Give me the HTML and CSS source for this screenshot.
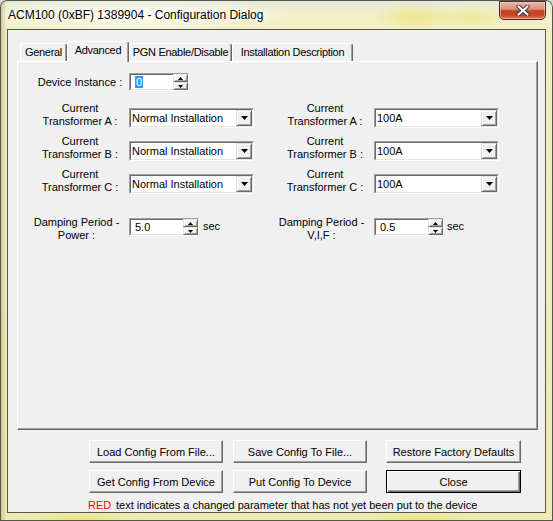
FILE: index.html
```html
<!DOCTYPE html>
<html>
<head>
<meta charset="utf-8">
<link rel="stylesheet" href="styles.css">
</head>
<body>
<div class="window">
  <div class="titlebar">
    <span class="title">ACM100 (0xBF) 1389904 - Configuration Dialog</span>
    <div class="close-x">
      <svg width="14" height="11" viewBox="0 0 14 11">
        <path d="M2.5 1.5 L11.5 9.5 M11.5 1.5 L2.5 9.5" stroke="#3a3a46" stroke-width="4.2" stroke-linecap="round" fill="none"/>
        <path d="M2.5 1.5 L11.5 9.5 M11.5 1.5 L2.5 9.5" stroke="#ffffff" stroke-width="2.2" stroke-linecap="round" fill="none"/>
      </svg>
    </div>
  </div>
  <div class="client">
    <div class="tabs">
      <div class="tab t-general">General</div>
      <div class="tab t-adv active">Advanced</div>
      <div class="tab t-pgn">PGN Enable/Disable</div>
      <div class="tab t-inst">Installation Description</div>
    </div>
    <div class="panel">
      <div class="row row-dev">
        <div class="field">
          <div class="lbl">Device Instance :</div>
          <div class="spin spin-dev">
            <div class="spin-text"><span class="sel">0</span></div>
            <div class="updown">
              <div class="ud-btn"><svg width="5" height="3" viewBox="0 0 5 3"><path d="M2.5 0 L5 3 H0 Z" fill="#000"/></svg></div>
              <div class="ud-btn"><svg width="5" height="3" viewBox="0 0 5 3"><path d="M0 0 H5 L2.5 3 Z" fill="#000"/></svg></div>
            </div>
          </div>
        </div>
      </div>

      <div class="row row-ct first">
        <div class="field">
          <div class="lbl">Current<br>Transformer A :</div>
          <div class="combo"><div class="combo-in"><span class="combo-text">Normal Installation</span><div class="dd-btn"><svg width="7" height="4" viewBox="0 0 7 4"><path d="M0 0 H7 L3.5 4 Z" fill="#000"/></svg></div></div></div>
        </div>
        <div class="field">
          <div class="lbl">Current<br>Transformer A :</div>
          <div class="combo"><div class="combo-in"><span class="combo-text">100A</span><div class="dd-btn"><svg width="7" height="4" viewBox="0 0 7 4"><path d="M0 0 H7 L3.5 4 Z" fill="#000"/></svg></div></div></div>
        </div>
      </div>

      <div class="row row-ct">
        <div class="field">
          <div class="lbl">Current<br>Transformer B :</div>
          <div class="combo"><div class="combo-in"><span class="combo-text">Normal Installation</span><div class="dd-btn"><svg width="7" height="4" viewBox="0 0 7 4"><path d="M0 0 H7 L3.5 4 Z" fill="#000"/></svg></div></div></div>
        </div>
        <div class="field">
          <div class="lbl">Current<br>Transformer B :</div>
          <div class="combo"><div class="combo-in"><span class="combo-text">100A</span><div class="dd-btn"><svg width="7" height="4" viewBox="0 0 7 4"><path d="M0 0 H7 L3.5 4 Z" fill="#000"/></svg></div></div></div>
        </div>
      </div>

      <div class="row row-ct">
        <div class="field">
          <div class="lbl">Current<br>Transformer C :</div>
          <div class="combo"><div class="combo-in"><span class="combo-text">Normal Installation</span><div class="dd-btn"><svg width="7" height="4" viewBox="0 0 7 4"><path d="M0 0 H7 L3.5 4 Z" fill="#000"/></svg></div></div></div>
        </div>
        <div class="field">
          <div class="lbl">Current<br>Transformer C :</div>
          <div class="combo"><div class="combo-in"><span class="combo-text">100A</span><div class="dd-btn"><svg width="7" height="4" viewBox="0 0 7 4"><path d="M0 0 H7 L3.5 4 Z" fill="#000"/></svg></div></div></div>
        </div>
      </div>

      <div class="row row-damp">
        <div class="field">
          <div class="lbl lbl-damp">Damping Period -<br>Power :</div>
          <div class="spin spin-damp">
            <div class="spin-text">5.0</div>
            <div class="updown">
              <div class="ud-btn"><svg width="5" height="3" viewBox="0 0 5 3"><path d="M2.5 0 L5 3 H0 Z" fill="#000"/></svg></div>
              <div class="ud-btn"><svg width="5" height="3" viewBox="0 0 5 3"><path d="M0 0 H5 L2.5 3 Z" fill="#000"/></svg></div>
            </div>
          </div>
          <span class="unit">sec</span>
        </div>
        <div class="field">
          <div class="lbl lbl-damp">Damping Period -<br>V,I,F :</div>
          <div class="spin spin-damp">
            <div class="spin-text">0.5</div>
            <div class="updown">
              <div class="ud-btn"><svg width="5" height="3" viewBox="0 0 5 3"><path d="M2.5 0 L5 3 H0 Z" fill="#000"/></svg></div>
              <div class="ud-btn"><svg width="5" height="3" viewBox="0 0 5 3"><path d="M0 0 H5 L2.5 3 Z" fill="#000"/></svg></div>
            </div>
          </div>
          <span class="unit unit-r">sec</span>
        </div>
      </div>
    </div>

    <div class="btns">
      <button class="btn">Load Config From File...</button>
      <button class="btn">Save Config To File...</button>
      <button class="btn btn-r">Restore Factory Defaults</button>
      <button class="btn">Get Config From Device</button>
      <button class="btn">Put Config To Device</button>
      <button class="btn btn-r btn-default">Close</button>
    </div>
    <div class="note"><span class="red">RED</span>text indicates a changed parameter that has not yet been put to the device</div>
  </div>
</div>
</body>
</html>
```

FILE: styles.css
```css
* { box-sizing: border-box; }
html, body { margin: 0; padding: 0; }
body {
  width: 553px;
  height: 521px;
  overflow: hidden;
  background: #d8d8c8;
  font-family: "Liberation Sans", Arial, sans-serif;
  font-size: 11px;
  color: #000;
}

.window {
  width: 553px;
  height: 521px;
  display: flex;
  flex-direction: column;
  border-radius: 7px 7px 0 0;
  box-shadow: inset 0 0 0 1px #55584a;
  background:
    linear-gradient(to right, rgba(130,128,90,0.45) 0px, rgba(130,128,90,0.45) 1px, rgba(170,168,120,0.3) 2px, rgba(170,168,120,0.3) 4px, rgba(0,0,0,0) 6px),
    radial-gradient(ellipse 160px 20px at 130px 15px, rgba(255,255,255,0.85), rgba(255,255,255,0)),
    radial-gradient(ellipse 45px 13px at 415px 17px, rgba(236,226,110,0.7), rgba(236,226,110,0)),
    radial-gradient(ellipse 40px 12px at 470px 17px, rgba(236,226,110,0.55), rgba(236,226,110,0)),
    radial-gradient(ellipse 70px 6px at 80px 519px, rgba(236,226,110,0.8), rgba(236,226,110,0)),
    radial-gradient(ellipse 70px 6px at 420px 519px, rgba(236,226,110,0.8), rgba(236,226,110,0)),
    linear-gradient(to bottom, #e4e8da 0px, #f2f0cc 14px, #f2efbe 40px, #efebb2 100%);
}

.titlebar {
  height: 29px;
  flex: none;
  display: flex;
  justify-content: space-between;
  align-items: flex-start;
  padding: 0 7px 0 8px;
}
.title {
  font-family: "Liberation Sans", Arial, sans-serif;
  font-size: 12px;
  line-height: 30px;
  color: #000;
  text-shadow: 0 0 5px #fff, 0 0 3px #fff;
}
.close-x {
  width: 47px;
  height: 19px;
  margin-top: 1px;
  border: 1px solid #4d2a24;
  border-radius: 0 0 5px 5px;
  background: linear-gradient(to bottom, #e9b3a4 0%, #de8f78 42%, #c6401f 52%, #c8462a 78%, #dd7d5c 100%);
  box-shadow: inset 0 0 0 1px rgba(255,230,220,0.45);
  display: flex;
  align-items: center;
  justify-content: center;
}

.client {
  margin: 0 7px 8px 7px;
  border: 1px solid #55574b;
  background: #f0f0f0;
  flex: 1;
  display: flex;
  flex-direction: column;
}

.tabs {
  display: flex;
  align-items: flex-end;
  height: 20px;
  margin: 11px 0 0 12px;
  position: relative;
  z-index: 1;
}
.tab {
  height: 18px;
  line-height: 16px;
  text-align: center;
  letter-spacing: -0.3px;
  background: #f0f0f0;
  border-top: 1px solid #fff;
  border-left: 1px solid #fff;
  border-right: 1px solid #696969;
  box-shadow: inset -1px 0 #a0a0a0;
  border-radius: 3px 3px 0 0;
  white-space: nowrap;
}
.tab.active {
  height: 21px;
  margin-bottom: -1px;
}
.t-general { width: 47px; }
.t-adv { width: 62px; }
.t-pgn { width: 103px; }
.t-inst { width: 121px; }

.panel {
  margin: 0 7px 0 9px;
  height: 369px;
  flex: none;
  border-top: 1px solid #fff;
  border-left: 1px solid #fff;
  border-right: 1px solid #696969;
  border-bottom: 1px solid #696969;
  box-shadow: inset -1px -1px #a0a0a0;
  background: #f0f0f0;
  padding-left: 15px;
}

.row { display: flex; }
.field {
  width: 245px;
  display: flex;
  align-items: flex-start;
  gap: 2px;
}
.lbl {
  width: 94px;
  flex: none;
  text-align: center;
  line-height: 13px;
  white-space: nowrap;
}
.row-dev { margin-top: 11px; }
.row-dev .field { align-items: center; }
.row-ct { margin-top: 7px; }
.row-ct.first { margin-top: 11px; }
.row-ct .combo { margin-top: 6px; }
.row-damp { margin-top: 22px; }
.row-damp .spin { margin-top: 2px; }
.lbl-damp { padding-right: 7px; }

.combo {
  width: 125px;
  height: 20px;
  border: 1px solid;
  border-color: #a0a0a0 #fff #fff #a0a0a0;
}
.combo-in {
  height: 100%;
  border: 1px solid;
  border-color: #696969 #e3e3e3 #e3e3e3 #696969;
  background: #fff;
  display: flex;
  align-items: center;
}
.combo-text {
  flex: 1;
  padding-left: 1px;
  line-height: 16px;
  white-space: nowrap;
}
.dd-btn {
  width: 16px;
  height: 16px;
  background: #f0f0f0;
  border: 1px solid;
  border-color: #e3e3e3 #696969 #696969 #e3e3e3;
  box-shadow: inset 1px 1px #fff, inset -1px -1px #a0a0a0;
  display: flex;
  align-items: center;
  justify-content: center;
}

.spin {
  height: 18px;
  display: flex;
  border: 1px solid;
  border-color: #a0a0a0 #fff #fff #a0a0a0;
  background: #fff;
}
.spin-dev { width: 60px; }
.spin-damp { width: 70px; }
.spin-text {
  flex: 1;
  border: 1px solid;
  border-right: none;
  border-color: #696969 #e3e3e3 #e3e3e3 #696969;
  padding-left: 4px;
  line-height: 14px;
  white-space: nowrap;
}
.sel {
  background: #3399ff;
  color: #fff;
  padding: 0 1px;
}
.updown {
  width: 15px;
  display: flex;
  flex-direction: column;
}
.ud-btn {
  flex: 1;
  background: #f0f0f0;
  border: 1px solid;
  border-color: #e3e3e3 #696969 #696969 #e3e3e3;
  box-shadow: inset 1px 1px #fff, inset -1px -1px #a0a0a0;
  display: flex;
  align-items: center;
  justify-content: center;
}
.unit { margin-left: 2px; line-height: 13px; margin-top: 4px; }
.unit-r { margin-left: 1px; }

.btns {
  display: grid;
  grid-template-columns: 134px 134px 144px;
  column-gap: 10px;
  row-gap: 7px;
  margin: 10px 0 0 81px;
}
.btn {
  height: 23px;
  width: 134px;
  padding: 0;
  margin: 0;
  font-family: inherit;
  font-size: 11px;
  color: #000;
  background: #f0f0f0;
  border: 1px solid;
  border-color: #fff #696969 #696969 #fff;
  box-shadow: inset -1px -1px #a0a0a0;
  border-radius: 0;
  text-align: center;
  white-space: nowrap;
}
.btn-r { width: 135px; margin-left: 9px; }
.btn-default {
  border: 1px solid #000;
  box-shadow: inset 1px 1px #fff, inset -1px -1px #696969, inset -2px -2px #a0a0a0;
}

.note {
  margin: 6px 0 0 80px;
  line-height: 13px;
  white-space: nowrap;
}
.red {
  color: #f00;
  display: inline-block;
  width: 28px;
}
```
